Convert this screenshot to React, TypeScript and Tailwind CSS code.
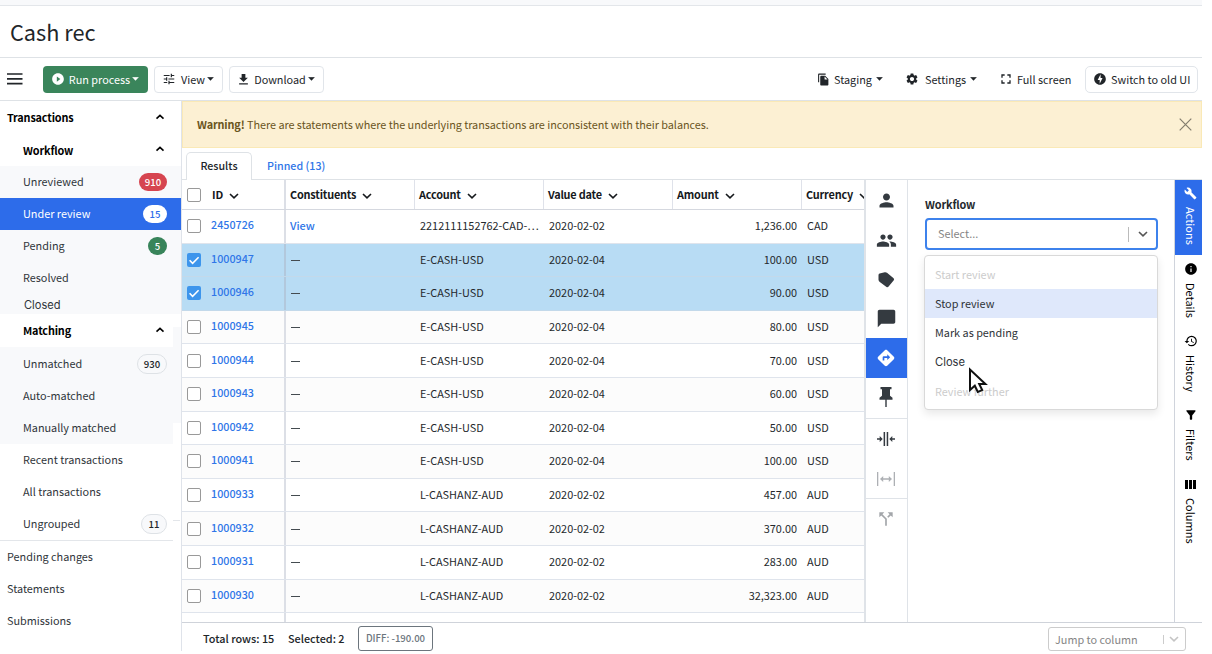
import type { ReactNode } from 'react';
import {
  MdCallSplit, MdChatBubble, MdDirections, MdDownload, MdFileCopy, MdFilterAlt, MdFullscreen,
  MdGroup, MdHistory, MdInfo, MdOfflineBolt, MdPerson, MdPlayCircleFilled, MdSettings, MdTune, MdBuild,
} from 'react-icons/md';

interface Row {
  id: string;
  account: string;
  date: string;
  amount: string;
  currency: string;
  view?: boolean;
  selected?: boolean;
}

const ROWS: Row[] = [
  { id: '2450726', account: '2212111152762-CAD-…', date: '2020-02-02', amount: '1,236.00', currency: 'CAD', view: true },
  { id: '1000947', account: 'E-CASH-USD', date: '2020-02-04', amount: '100.00', currency: 'USD', selected: true },
  { id: '1000946', account: 'E-CASH-USD', date: '2020-02-04', amount: '90.00', currency: 'USD', selected: true },
  { id: '1000945', account: 'E-CASH-USD', date: '2020-02-04', amount: '80.00', currency: 'USD' },
  { id: '1000944', account: 'E-CASH-USD', date: '2020-02-04', amount: '70.00', currency: 'USD' },
  { id: '1000943', account: 'E-CASH-USD', date: '2020-02-04', amount: '60.00', currency: 'USD' },
  { id: '1000942', account: 'E-CASH-USD', date: '2020-02-04', amount: '50.00', currency: 'USD' },
  { id: '1000941', account: 'E-CASH-USD', date: '2020-02-04', amount: '100.00', currency: 'USD' },
  { id: '1000933', account: 'L-CASHANZ-AUD', date: '2020-02-02', amount: '457.00', currency: 'AUD' },
  { id: '1000932', account: 'L-CASHANZ-AUD', date: '2020-02-02', amount: '370.00', currency: 'AUD' },
  { id: '1000931', account: 'L-CASHANZ-AUD', date: '2020-02-02', amount: '283.00', currency: 'AUD' },
  { id: '1000930', account: 'L-CASHANZ-AUD', date: '2020-02-02', amount: '32,323.00', currency: 'AUD' },
];

const GRID = 'grid grid-cols-[27px_75px_2px_129px_129px_129px_129px_62px]';

function Caret() {
  return (
    <svg width="7" height="4" viewBox="0 0 7 4" className="shrink-0">
      <path d="M.6.2h5.8L3.5 3.4z" fill="currentColor" stroke="currentColor" strokeWidth=".5" strokeLinejoin="round" />
    </svg>
  );
}

function Chevron({ up = false, className = '' }: { up?: boolean; className?: string }) {
  return (
    <svg width="10" height="6" viewBox="0 0 10 6" className={`shrink-0 ${className}`}>
      <path d={up ? 'M1.5 4.6 5 1.4l3.5 3.2' : 'M1 1l4 3.8L9 1'} fill="none" stroke="currentColor" strokeWidth="1.6" />
    </svg>
  );
}

function Checkbox({ checked = false }: { checked?: boolean }) {
  if (!checked) return <span className="block h-[14px] w-[14px] rounded-[2px] border-[1.5px] border-[#999] bg-white" />;
  return (
    <svg width="14" height="14" viewBox="0 0 14 14">
      <rect width="14" height="14" rx="2" fill="#3d95ec" />
      <path d="M2.6 7.3l3 3 6-6" fill="none" stroke="#fff" strokeWidth="1.6" />
    </svg>
  );
}

function NavHeader({ label, className }: { label: string; className: string }) {
  return (
    <div className={`flex items-center justify-between font-bold tracking-[-0.15px] text-black ${className}`}>
      <span className="pb-px">{label}</span>
      <Chevron up className="mb-[2px]" />
    </div>
  );
}

function NavItem({ label, className = '', badge }: { label: string; className?: string; badge?: ReactNode }) {
  return (
    <div className={`flex h-8 items-center justify-between pl-[23px] ${className}`}>
      <span className="pb-[2px]">{label}</span>
      {badge}
    </div>
  );
}

function Sidebar() {
  return (
    <nav className="w-[181px] shrink-0 text-[#2f353a]">
      <NavHeader label="Transactions" className="h-[33px] pr-[16px] pl-[7px]" />
      <NavHeader label="Workflow" className="h-8 pr-[16px] pl-[23px]" />
      <div className="h-[148px] bg-[#f8f9fb]">
        <NavItem
          label="Unreviewed"
          className="pr-[14px]"
          badge={<span className="flex h-[18px] w-[28px] items-center justify-center rounded-full bg-[#d64550] text-[9.6px] font-medium text-white">910</span>}
        />
        <NavItem
          label="Under review"
          className="bg-[#2d6cea] pr-[14px] text-white"
          badge={<span className="flex h-[18px] w-[24px] items-center justify-center rounded-full bg-white text-[9.6px] font-medium text-[#2d6cea]">15</span>}
        />
        <NavItem
          label="Pending"
          className="pr-[14px]"
          badge={<span className="flex h-[18px] w-[19px] items-center justify-center rounded-full bg-[#38845a] text-[9.6px] font-medium text-white">5</span>}
        />
        <NavItem label="Resolved" />
        <div className="flex h-[22px] items-center pl-6 font-[Inter,sans-serif] text-[11.1px]">Closed</div>
      </div>
      <div className="flex">
        <div className="w-[173px]">
          <NavHeader label="Matching" className="h-[33px] pr-[8px] pl-[23px]" />
          <div className="h-[97px] bg-[#f8f9fb]">
            <NavItem
              label="Unmatched"
              className="h-[33px]! pr-[6px]"
              badge={<span className="flex h-[20px] w-[30px] items-center justify-center rounded-full border border-[#dee2e6] bg-[#f8f9fb] text-[9.6px] font-medium text-[#212529]">930</span>}
            />
            <NavItem label="Auto-matched" />
            <NavItem label="Manually matched" />
          </div>
          <NavItem label="Recent transactions" />
          <NavItem label="All transactions" />
          <NavItem
            label="Ungrouped"
            className="pr-[6px]"
            badge={<span className="flex h-[20px] w-[26px] items-center justify-center rounded-full border border-[#dee2e6] bg-[#f8f9fb] text-[9.6px] font-medium text-[#212529]">11</span>}
          />
        </div>
        <div className="flex w-2 flex-col">
          <div className="mt-[13px] h-[96px] bg-[#f8f9fb]" />
          <div className="mt-[97px] h-px w-[7px] bg-[#e3e6ea]" />
        </div>
      </div>
      <div className="w-[173px] border-t border-[#e3e6ea]">
        <div className="flex h-8 items-center pb-[2px] pl-[7px]">Pending changes</div>
        <div className="flex h-8 items-center pb-[2px] pl-[7px]">Statements</div>
        <div className="flex h-8 items-center pb-[2px] pl-[7px]">Submissions</div>
      </div>
    </nav>
  );
}

function Toolbar() {
  return (
    <header className="flex h-[43px] w-[1202px] items-center border-b border-[#dee2e6] text-[#212529] [&_span]:pb-px">
      <svg width="16" height="12" viewBox="0 0 16 12" className="ml-[6.5px]">
        <path d="M0 1h15.5M0 5.8h15.5M0 10.6h15.5" stroke="#212529" strokeWidth="1.7" />
      </svg>
      <button className="ml-5 flex h-[27px] w-[105px] items-center rounded-[4px] bg-[#3a855b] pl-[8px] text-white">
        <MdPlayCircleFilled size={14} className="shrink-0" />
        <span className="ml-[3px] w-[64px] whitespace-nowrap">Run process</span>
        <Caret />
      </button>
      <button className="ml-[6px] flex h-[27px] w-[69px] items-center rounded-[4px] border border-[#e1e5ea] pl-[7px]">
        <MdTune size={14} />
        <span className="ml-1 w-[27px]">View</span>
        <Caret />
      </button>
      <button className="ml-[6px] flex h-[27px] w-[95px] items-center rounded-[4px] border border-[#e1e5ea] pl-[6px]">
        <MdDownload size={15} />
        <span className="ml-[2px] w-[55px]">Download</span>
        <Caret />
      </button>
      <div className="ml-auto flex items-center">
        <MdFileCopy size={13} />
        <span className="ml-1 w-[42px]">Staging</span>
        <Caret />
        <MdSettings size={14} className="ml-[22px]" />
        <span className="ml-[6px] w-[45px]">Settings</span>
        <Caret />
        <MdFullscreen size={16} className="ml-[21px]" />
        <span className="ml-[3px] w-[68px] whitespace-nowrap">Full screen</span>
        <button className="mr-[4px] flex h-[27px] w-[113px] items-center rounded-[5px] border border-[#e1e5ea] pl-[7px]">
          <MdOfflineBolt size={14} />
          <span className="ml-1 whitespace-nowrap">Switch to old UI</span>
        </button>
      </div>
    </header>
  );
}

function HeadCell({ label, last = false }: { label: string; last?: boolean }) {
  return (
    <div className={`flex items-center gap-[6px] overflow-hidden pl-1 whitespace-nowrap ${last ? '' : 'border-r border-[#dfe2ea]'}`}>
      <span className="pb-[2px]">{label}</span>
      <Chevron className="mt-[2px]" />
    </div>
  );
}

function ResultsGrid() {
  return (
    <div className="flex h-[442px] w-[682px] shrink-0 flex-col overflow-hidden text-[10.9px]">
      <div className={`${GRID} h-[30px] shrink-0 border-b border-[#d5d8df] font-bold tracking-[-0.2px] text-[#16191c]`}>
        <div className="flex items-center pl-[5px]"><Checkbox /></div>
        <div className="flex items-center gap-[6px] pl-[3px]"><span className="pb-[2px]">ID</span><Chevron className="mt-[2px]" /></div>
        <div className="bg-[#dcdfe6]" />
        <HeadCell label="Constituents" />
        <HeadCell label="Account" />
        <HeadCell label="Value date" />
        <HeadCell label="Amount" />
        <HeadCell label="Currency" last />
      </div>
      {ROWS.map((row, i) => (
        <div
          key={row.id}
          className={`${GRID} h-[33.6px] shrink-0 items-center border-b text-[#24282c] ${
            row.selected ? 'border-[#c3d9ea] bg-[#b8dcf4]' : i % 2 ? 'border-[#dfe4ec] bg-[#fcfcfc]' : 'border-[#dfe4ec] bg-white'
          }`}
        >
          <div className="pl-[5px]"><Checkbox checked={row.selected} /></div>
          <div className="pb-[2px] pl-[2px] text-[10.75px] font-medium text-[#2f76e8]">{row.id}</div>
          <div className={`self-stretch ${row.selected ? 'bg-[#b2c8dc]' : 'bg-[#dcdfe6]'}`} />
          {row.view ? (
            <div className="pb-[2px] pl-1 font-medium text-[#2f76e8]">View</div>
          ) : (
            <div className="pt-px pl-[5px]"><span className="block h-px w-[9px] bg-[#444b50]" /></div>
          )}
          <div className="pb-[2px] pl-[5px] whitespace-nowrap">{row.account}</div>
          <div className="pb-[2px] pl-[5px]">{row.date}</div>
          <div className="pr-[5px] pb-[2px] text-right">{row.amount}</div>
          <div className="pb-[2px] pl-[5px]">{row.currency}</div>
        </div>
      ))}
      <div className={`${GRID} flex-1`}>
        <div />
        <div />
        <div className="bg-[#dcdfe6]" />
      </div>
    </div>
  );
}

function IconRail() {
  return (
    <div className="flex w-[44px] shrink-0 flex-col border-r border-l-2 border-[#dfe3e8] text-[#343a40] [&>div]:flex [&>div]:items-center [&>div]:justify-center [&>div]:pr-px">
      <div className="h-[40px]"><MdPerson size={21} /></div>
      <div className="h-[40px]"><MdGroup size={21} /></div>
      <div className="h-[39px]">
        <svg width="18" height="18" viewBox="0 0 18 18">
          <path d="M1.5 4.2Q1.5 3 2.6 2.6L7.8 1.2Q9 1 10 1.7L16.6 7.2Q17.5 8.2 16.8 9.2L11.4 15.8Q10.5 16.7 9.5 15.9L2.8 11.1Q1.6 10.1 1.5 8.8Z" fill="currentColor" />
        </svg>
      </div>
      <div className="h-[39px]"><MdChatBubble size={21} /></div>
      <div className="h-[40px] bg-[#2d6cea] text-white"><MdDirections size={20} /></div>
      <div className="h-[41px] border-b border-[#dfe3e8] pb-[3px]">
        <svg width="14" height="22" viewBox="0 0 14 22">
          <path d="M1.5 1h11v2.2h-1.5v6.6l2.5 2v1.9H7.7V21H6.3v-7.3H.5v-1.9l2.5-2V3.2H1.5z" fill="currentColor" />
        </svg>
      </div>
      <div className="h-[40px]">
        <svg width="18" height="15" viewBox="0 0 18 15" fill="currentColor">
          <path d="M6.6 0h1.5v14H6.6zM9.7 0h1.5v14H9.7zM0 6.2h2.7V4l3 3-3 3V7.8H0zM18 6.2h-2.7V4l-3 3 3 3V7.8H18z" />
        </svg>
      </div>
      <div className="h-[40px] border-b border-[#dfe3e8] text-[#adb0b4]">
        <svg width="18" height="14" viewBox="0 0 18 14" fill="currentColor">
          <path d="M0 0h1.3v14H0zM16.7 0H18v14h-1.3zM3 7l3.2-3v2.2h5.6V4L15 7l-3.2 3V7.8H6.2V10z" />
        </svg>
      </div>
      <div className="h-[39px] text-[#a3a6aa]"><MdCallSplit size={20} /></div>
    </div>
  );
}

function ActionsPanel() {
  return (
    <div className="relative flex w-[266px] shrink-0 flex-col pl-[17px]">
      <div className="mt-4 h-[17px] leading-[17px] font-bold tracking-[-0.15px] text-[#25292d]">Workflow</div>
      <div className="mt-[5px] flex h-8 w-[233px] items-center rounded-[4px] border-2 border-[#3d82ec] pl-[11px] text-[#858585]">
        <span className="flex-1 pb-[2px]">Select...</span>
        <span className="h-[15px] w-px bg-[#bbb]" />
        <Chevron className="mr-[8px] ml-[9px] text-[#555]" />
      </div>
      {/* dropdown menu */}
      <div className="absolute top-[75px] left-4 flex h-[155px] w-[234px] flex-col rounded-[4px] border border-[#d9d9d9] bg-white pt-[3px] text-[#2e3338] shadow-[0_4px_8px_rgba(0,0,0,0.09)] [&>div]:flex [&>div]:items-center [&>div]:pl-[10px]">
        <div className="h-[30px] pb-px text-[#ccc]">Start review</div>
        <div className="h-[29px] bg-[#dfe8fb] pb-[2px]">Stop review</div>
        <div className="h-[30px] pb-[2px]">Mark as pending</div>
        <div className="h-[27px] font-[Inter,sans-serif] text-[11.2px]">Close</div>
        <div className="h-[33px] pb-[2px] text-[#ccc]">Review further</div>
      </div>
      {/* pointer over the menu */}
      <svg width="20" height="27" viewBox="0 0 20 27" className="absolute top-[187px] left-[60px]">
        <path d="M2 2.5v20.5l4.8-4.3 3 6.3 4.4-1.9-3-6.2h6.2z" fill="#fff" stroke="#111" strokeWidth="2" />
      </svg>
    </div>
  );
}

function SideTab({ icon, label, className }: { icon: ReactNode; label: string; className: string }) {
  return (
    <div className={`flex flex-col items-center pl-1 ${className}`}>
      {icon}
      <span className="[writing-mode:vertical-rl]">{label}</span>
    </div>
  );
}

function SideTabs() {
  return (
    <div className="flex w-7 shrink-0 flex-col border-l border-[#d0d4dc] text-[11px] text-black">
      <SideTab icon={<MdBuild size={13} />} label="Actions" className="h-[75px] gap-[7px] bg-[#2d6cea] pt-[7px] text-white" />
      <SideTab icon={<MdInfo size={14} />} label="Details" className="h-[72px] gap-[7px] pt-[7px]" />
      <SideTab icon={<MdHistory size={14} />} label="History" className="h-[76px] gap-[7px] pt-[7px]" />
      <SideTab icon={<MdFilterAlt size={14} />} label="Filters" className="h-[68px] gap-[7px] pt-[5px]" />
      <SideTab
        icon={
          <svg width="11" height="9" viewBox="0 0 11 9">
            <path d="M0 0h3v9H0zM4 0h3v9H4zM8 0h3v9H8z" fill="currentColor" />
          </svg>
        }
        label="Columns"
        className="gap-[9px] pt-[9px]"
      />
    </div>
  );
}

export default function App() {
  return (
    <div className="h-[654px] w-[1212px] overflow-hidden bg-white font-['Noto_Sans_CJK_SC','Noto_Sans',sans-serif] text-[10.85px] leading-4">
      <div className="h-[6px] w-[1202px] border-b border-[#e3e6ea] bg-[#f8f9fb]" />
      <div className="flex h-[52px] w-[1202px] items-center border-b border-[#dee2e6] pl-[10px] text-[21.7px] text-[#212529]">Cash rec</div>
      <Toolbar />
      <div className="flex h-[550px] w-[1202px]">
        <Sidebar />
        <main className="flex min-w-0 flex-1 flex-col border-l border-[#dfe3ea]">
          <div className="flex h-[47px] shrink-0 items-center justify-between border border-[#fae9b6] bg-[#fcf0d3] pr-[9px] pl-[14px] text-[#6a551d]">
            <span className="pb-[2px] tracking-[-0.04px]"><b className="tracking-[-0.12px]">Warning!</b> There are statements where the underlying transactions are inconsistent with their balances.</span>
            <svg width="13" height="13" viewBox="0 0 13 13">
              <path d="M.7.7l11.6 11.6M12.3.7L.7 12.3" stroke="#837d6e" strokeWidth="1.2" />
            </svg>
          </div>
          <div className="flex h-8 shrink-0 items-end border-b border-[#dee2e6] pl-1 text-[10.7px] font-medium">
            <div className="-mb-px flex h-7 w-[66px] items-center justify-center rounded-t-[5px] border border-b-0 border-[#dee2e6] bg-white pb-px text-[#212529]">Results</div>
            <div className="flex h-[26px] items-center pl-[15px] text-[#2f76e8]">Pinned (13)</div>
          </div>
          <div className="flex h-[442px] shrink-0">
            <ResultsGrid />
            <IconRail />
            <ActionsPanel />
            <SideTabs />
          </div>
          <footer className="flex flex-1 items-end border-t border-[#cfd3da] pl-[21px] text-[10.85px]">
            <span className="w-[85px] pb-[5px] font-medium text-[#212529]">Total rows: 15</span>
            <span className="w-[70px] pb-[5px] font-medium text-[#212529]">Selected: 2</span>
            <span className="flex h-[25px] w-[75px] items-center justify-center rounded-[3px] border border-[#6c757d] pb-px text-[9.6px] font-medium text-[#6c757d]">DIFF: -190.00</span>
            <div className="mr-4 ml-auto flex h-6 w-[138px] items-center rounded-[3px] border border-[#ccc] pl-[6px] text-[#858585]">
              <span className="flex-1 pb-px">Jump to column</span>
              <span className="h-[9px] w-px bg-[#ccc]" />
              <Chevron className="mr-[6px] ml-[5px] text-[#c4c4c4]" />
            </div>
          </footer>
        </main>
      </div>
    </div>
  );
}
